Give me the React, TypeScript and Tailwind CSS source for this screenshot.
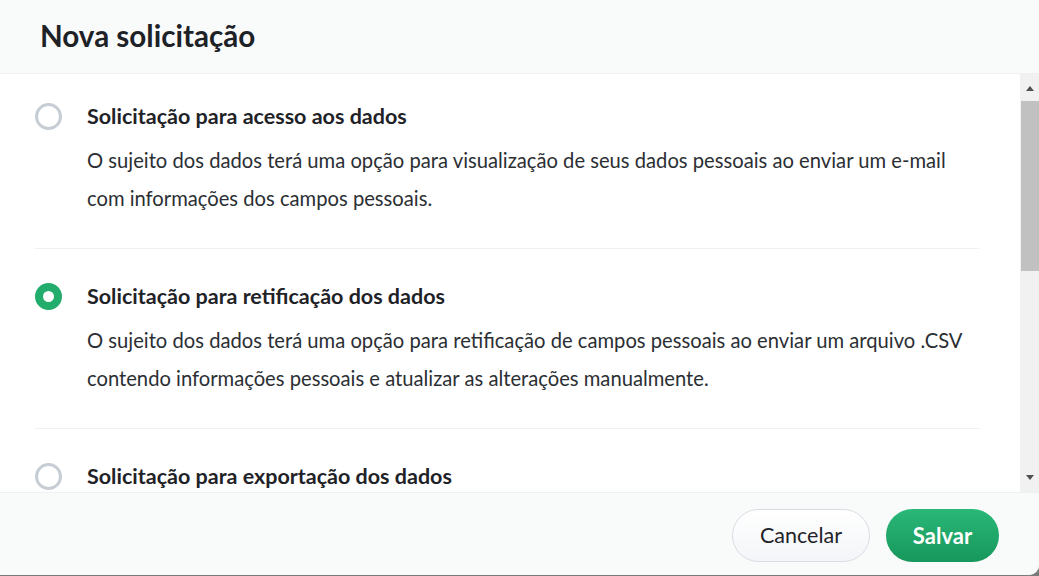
const items = [
  {
    title: 'Solicitação para acesso aos dados',
    lines: [
      'O sujeito dos dados terá uma opção para visualização de seus dados pessoais ao enviar um e-mail',
      'com informações dos campos pessoais.',
    ],
    checked: false,
    pt: 'pt-[27px]',
  },
  {
    title: 'Solicitação para retificação dos dados',
    lines: [
      'O sujeito dos dados terá uma opção para retificação de campos pessoais ao enviar um arquivo .CSV',
      'contendo informações pessoais e atualizar as alterações manualmente.',
    ],
    checked: true,
    pt: 'pt-[32px]',
  },
  {
    // the rest of this item is scrolled out of view
    title: 'Solicitação para exportação dos dados',
    lines: [],
    checked: false,
    pt: 'pt-[32px]',
  },
]

function Radio({ checked }: { checked: boolean }) {
  if (checked) {
    return <div className="h-[27px] w-[27px] shrink-0 rounded-full border-[8px] border-[#22ad6d] bg-white" />
  }
  return <div className="h-[27px] w-[27px] shrink-0 rounded-full border-[3px] border-[#c6cdd4] bg-white" />
}

function Scrollbar() {
  return (
    <div className="flex w-[19px] shrink-0 flex-col items-end bg-[#f1f1f1]">
      <div className="flex h-[27px] w-full items-center justify-center pt-[2px]">
        <div className="h-0 w-0 border-x-[4px] border-b-[5px] border-x-transparent border-b-[#505050]" />
      </div>
      <div className="h-[170px] w-[18px] bg-[#c1c1c1]" />
      <div className="flex-1" />
      <div className="flex h-[27px] w-full items-center justify-center pb-[2px]">
        <div className="h-0 w-0 border-x-[4px] border-t-[5px] border-x-transparent border-t-[#505050]" />
      </div>
    </div>
  )
}

export default function App() {
  return (
    <div className="h-[576px] w-[1039px] overflow-hidden bg-[#7a7a7a] font-['Lato','Noto_Sans',sans-serif]">
      <div className="flex h-[575px] flex-col overflow-hidden rounded-br-[10px] bg-white">
        <div className="flex h-[74px] shrink-0 items-center border-b border-[#eef1f1] bg-[#f9fbfb] px-10 pb-[2px]">
          <h1 className="text-[29.6px] font-bold leading-none text-[#1e2227]">Nova solicitação</h1>
        </div>

        <div className="flex min-h-0 flex-1">
          <div className="min-w-0 flex-1 overflow-hidden pl-[35px] pr-[41px]">
            {items.map((item, i) => (
              <div
                key={item.title}
                className={i < items.length - 1 ? 'border-b border-[#eef1f2] pb-[31px]' : ''}
              >
                <div className={item.pt}>
                  <div className="flex items-center gap-[25px]">
                    <Radio checked={item.checked} />
                    <div className="text-[21.5px] font-bold leading-[30px] text-[#1f2328]">{item.title}</div>
                  </div>
                  {item.lines.length > 0 && (
                    <div className="mt-[10px] pl-[52px] text-[20.2px] leading-[38px] text-[#2b2f34]">
                      {item.lines.map((l) => (
                        <div key={l} className="whitespace-nowrap">{l}</div>
                      ))}
                    </div>
                  )}
                </div>
              </div>
            ))}
          </div>
          <Scrollbar />
        </div>

        <div className="flex h-[83px] shrink-0 items-start justify-end gap-4 border-t border-[#eef1f1] bg-[#f9fbfb] pr-10 pt-[16px]">
          <button className="h-[53px] w-[138px] rounded-full border border-[#d8dde4] bg-gradient-to-b from-white to-[#f3f5f8] text-[21.5px] text-[#1f2328]">
            Cancelar
          </button>
          <button className="h-[53px] w-[113px] rounded-full bg-gradient-to-b from-[#29b878] to-[#17975b] text-[22px] font-bold text-white">
            Salvar
          </button>
        </div>
      </div>
    </div>
  )
}
